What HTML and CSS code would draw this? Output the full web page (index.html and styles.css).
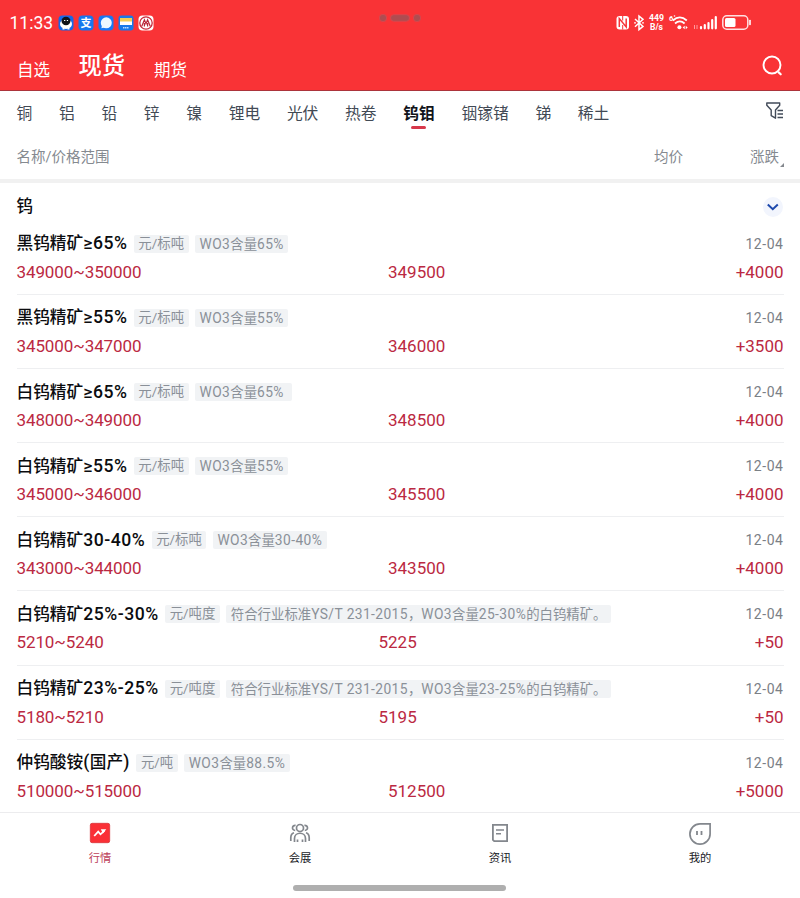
FILE: index.html
```
<!DOCTYPE html>
<html lang="zh-CN">
<head>
<meta charset="utf-8">
<title>现货行情</title>
<link rel="stylesheet" href="styles.css">
</head>
<body>
<header class="header">
  <div class="status">
    <span class="clock">11:33</span>
    <svg class="apps" width="98" height="16" viewBox="0 0 98 16">
      <rect x=".5" y=".5" width="15" height="15" rx="4" fill="#1768e8"/><ellipse cx="8" cy="9" rx="6" ry="5" fill="#fff"/><ellipse cx="8" cy="6" rx="4.5" ry="4.2" fill="#10131a"/><path d="M6 5.5h1.3M8.8 5.5h1.3" stroke="#fff"/><path d="M5.5 13v1.5M10.5 13v1.5" stroke="#fff" stroke-width="2"/>
      <rect x="20.5" y=".5" width="15" height="15" rx="4" fill="#1677ee"/><text x="28" y="12" text-anchor="middle" class="pay">支</text>
      <rect x="40.5" y=".5" width="15" height="15" rx="4" fill="#1878f4"/><circle cx="48.3" cy="7.8" r="5.5" fill="#eef7ff"/><path d="M44 10l-.6 3.3 4-1" fill="#eef7ff"/>
      <rect x="60.5" y=".5" width="15" height="15" rx="3" fill="#1879e9"/><path d="M62 3h12v7H62z" fill="#fff"/><path d="M62 3h12v3.5H62z" fill="#f4ce55"/><path d="M65 12.7h6" stroke="#b9dcff" stroke-width="1.5" stroke-dasharray="1.5 .5"/>
      <rect x="80.5" y=".5" width="15" height="15" rx="4" fill="#fff"/><circle cx="88" cy="8" r="6.2" fill="none" stroke="#c82839" stroke-width="1.3"/><path d="M83.8 11.3l2.6-6.5 1.6 4 1.6-4 2.6 6.500M86.400 8v3.500M89.600 8v3.500" fill="none" stroke="#b92639" stroke-width="1.2"/>
    </svg>
    <svg class="island" width="44" height="10" viewBox="0 0 44 10"><g fill="#ae4d51" stroke="#d9474d"><circle cx="5" cy="5" r="3.7"/><rect x="12.5" y="1.7" width="19" height="6.6" rx="3.3"/><circle cx="39" cy="5" r="3.7"/></g></svg>
    <svg class="signals" width="138" height="20" viewBox="616 13 138 20">
      <rect x="616.5" y="16" width="12.5" height="13.5" rx="3" fill="#fff"/><path d="M619.3 27V18.5L626.2 27V18.5" fill="none" stroke="#f73439" stroke-width="1.5"/><path d="M622.7 16v4.5M622.7 25v4.5" stroke="#f73439"/>
      <path d="M635 19l8 7.4-4 3.3V16l4 3.3-8 7.4" fill="none" stroke="#fff" stroke-width="1.5"/><circle cx="635" cy="22.8" r=".9" fill="#fff"/><circle cx="643" cy="22.8" r=".9" fill="#fff"/>
      <text x="656.5" y="21.2" class="rate" text-anchor="middle" textLength="15" lengthAdjust="spacingAndGlyphs">449</text><text x="656.5" y="30" class="rate" text-anchor="middle" textLength="13" lengthAdjust="spacingAndGlyphs">B/s</text>
      <text x="669" y="20.5" class="tiny">6</text><circle cx="674.5" cy="16" r=".8" fill="#fff"/>
      <g fill="none" stroke="#fff" stroke-width="1.8"><path d="M672.8 20.5q7-6.2 14 0M675 23.5q4.8-4.2 9.6 0"/></g><circle cx="679.4" cy="27.3" r="2" fill="#fff"/><path d="M684.7 25.7v3.6l-2-1.8zM685.7 25.7v3.6l2-1.8z" fill="#fff"/>
      <path d="M694.5 25v4M697 25v4" stroke="#ff9a9d"/><g stroke="#fff" stroke-width="2.2" stroke-linecap="round"><path d="M701 27v1.3M704.8 25v3.3M708.5 23v5.3M712.2 20v8.3M715.8 17v11.3"/></g>
      <rect x="722.8" y="15.8" width="25" height="13.4" rx="4" fill="none" stroke="#ffdfe0" stroke-width="1.5"/><rect x="725" y="18" width="10.5" height="9" rx="1.5" fill="#fff"/><path d="M750 20.5v4" stroke="#fff" stroke-width="1.6" stroke-linecap="round"/>
    </svg>
  </div>
  <nav class="modes">
    <span class="mode">自选</span><span class="mode mode-on">现货</span><span class="mode">期货</span>
    <svg class="search" width="22" height="24" viewBox="0 0 22 24"><circle cx="10" cy="11" r="8.5" fill="none" stroke="#fff" stroke-width="1.9"/><path d="M16.7 18.4l2 1.9" stroke="#fff" stroke-width="2.2" stroke-linecap="round"/></svg>
  </nav>
</header>
<nav class="metals">
  <span>铜</span><span>铝</span><span>铅</span><span>锌</span><span>镍</span><span>锂电</span><span>光伏</span><span>热卷</span><span class="metal-on">钨钼</span><span>铟镓锗</span><span>锑</span><span>稀土</span>
  <svg class="filter" width="18" height="18" viewBox="0 0 18 18"><path d="M.8 1h12.9v2.2L9.5 8v8.2l-4.3-2.5V8L.8 3.2z" fill="none" stroke="#424b59" stroke-width="1.4" stroke-linejoin="round"/><path d="M11.5 8.5H17M11.5 12H17M11.5 15.5H17" stroke="#424b59" stroke-width="1.4"/></svg>
</nav>
<div class="columns"><span>名称/价格范围</span><span class="col-avg">均价</span><span>涨跌</span><i class="sort"></i></div>
<main class="list">
  <div class="group"><h2>钨</h2><svg width="20" height="20" viewBox="0 0 20 20"><circle cx="10" cy="10" r="10" fill="#f2f5fd"/><path d="M4.8 7.500l5 4.700 5-4.700" fill="none" stroke="#1d49ad" stroke-width="2"/></svg></div>
  <article class="row"><div class="line"><h3>黑钨精矿<b>≥65%</b></h3><span class="tag">元/标吨</span><span class="tag"><b>WO3</b>含量<b>65%</b></span><time>12-04</time></div><div class="values"><span>349000~350000</span><span>349500</span><span>+4000</span></div></article>
  <article class="row"><div class="line"><h3>黑钨精矿<b>≥55%</b></h3><span class="tag">元/标吨</span><span class="tag"><b>WO3</b>含量<b>55%</b></span><time>12-04</time></div><div class="values"><span>345000~347000</span><span>346000</span><span>+3500</span></div></article>
  <article class="row"><div class="line"><h3>白钨精矿<b>≥65%</b></h3><span class="tag">元/标吨</span><span class="tag tag-loose"><b>WO3</b>含量<b>65%</b></span><time>12-04</time></div><div class="values"><span>348000~349000</span><span>348500</span><span>+4000</span></div></article>
  <article class="row"><div class="line"><h3>白钨精矿<b>≥55%</b></h3><span class="tag">元/标吨</span><span class="tag"><b>WO3</b>含量<b>55%</b></span><time>12-04</time></div><div class="values"><span>345000~346000</span><span>345500</span><span>+4000</span></div></article>
  <article class="row"><div class="line"><h3>白钨精矿<b>30-40%</b></h3><span class="tag">元/标吨</span><span class="tag"><b>WO3</b>含量<b>30-40%</b></span><time>12-04</time></div><div class="values"><span>343000~344000</span><span>343500</span><span>+4000</span></div></article>
  <article class="row"><div class="line"><h3>白钨精矿<b>25%-30%</b></h3><span class="tag">元/吨度</span><span class="tag">符合行业标准<b>YS/T 231-2015</b>，<b>WO3</b>含量<b>25-30%</b>的白钨精矿。</span><time>12-04</time></div><div class="values values-short"><span>5210~5240</span><span>5225</span><span>+50</span></div></article>
  <article class="row"><div class="line"><h3>白钨精矿<b>23%-25%</b></h3><span class="tag">元/吨度</span><span class="tag">符合行业标准<b>YS/T 231-2015</b>，<b>WO3</b>含量<b>23-25%</b>的白钨精矿。</span><time>12-04</time></div><div class="values values-short"><span>5180~5210</span><span>5195</span><span>+50</span></div></article>
  <article class="row"><div class="line"><h3>仲钨酸铵<b>(</b>国产<b>)</b></h3><span class="tag">元/吨</span><span class="tag"><b>WO3</b>含量<b>88.5%</b></span><time>12-04</time></div><div class="values"><span>510000~515000</span><span>512500</span><span>+5000</span></div></article>
</main>
<footer class="footer">
  <nav class="tabs">
    <div class="tab tab-on"><svg width="24" height="24" viewBox="0 0 24 24"><rect x="2.3" y="1.3" width="19.4" height="19.4" rx="1.8" fill="#fa3036" stroke="#d52c32" stroke-width=".7"/><path d="M6.2 14l4-4.3 2.3 2.6 4-3.7" fill="none" stroke="#fff" stroke-width="1.8"/><path d="M12.8 7.2h5.5l-3.4 4.3z" fill="#fff"/></svg><span>行情</span></div>
    <div class="tab"><svg width="24" height="24" viewBox="0 0 24 24"><g fill="none" stroke="#83878d" stroke-width="1.7"><circle cx="12" cy="6" r="3.5"/><path d="M6.5 20v-3.5c0-7 11-7 11 0V20M9.5 20v-2.5M14.5 20v-2.5M7.6 3.4C3.7 3 3.4 8.3 7.2 8.3M16.4 3.4c3.9-.4 4.2 4.9.4 4.9M2.8 19v-3.3c0-2.8 1.2-4.4 3.2-5M21.2 19v-3.3c0-2.8-1.2-4.4-3.2-5"/></g></svg><span>会展</span></div>
    <div class="tab"><svg width="24" height="24" viewBox="0 0 24 24"><path d="M4.9 2.8h14.2v16.4H6.2l-1.3-1.3z" fill="none" stroke="#83878d" stroke-width="1.8"/><path d="M8 8h8M8 11.8h5" stroke="#83878d" stroke-width="1.6"/></svg><span>资讯</span></div>
    <div class="tab"><svg width="24" height="24" viewBox="0 0 24 24"><path d="M12 1.9h10.1V12A10.1 10.1 0 1 1 12 1.9z" fill="none" stroke="#83878d" stroke-width="1.7"/><path d="M9 9v4M13.5 9v4" stroke="#83878d" stroke-width="1.8"/></svg><span>我的</span></div>
  </nav>
  <div class="home"></div>
</footer>
</body>
</html>
```
FILE: styles.css
```
* { box-sizing: border-box; }
body {
  margin: 0;
  width: 800px;
  height: 898px;
  overflow: hidden;
  display: flex;
  flex-direction: column;
  background: #fff;
  color: #0b0c0f;
  font-family: Roboto, "Noto Sans CJK SC", sans-serif;
}
h2, h3 { margin: 0; font-weight: 500; }
b { font-weight: inherit; }
svg { display: block; flex: none; }
.header { height: 91px; flex: none; background: #f93336; border-bottom: 1px solid #ac343b; color: #fff; }
.status { height: 45px; display: flex; align-items: center; padding-left: 9.5px; }
.clock { width: 48px; font-size: 17.5px; line-height: 24px; white-space: nowrap; }
.island { margin-left: 222px; margin-top: -9px; }
.signals { margin-left: 194px; }
.pay { font: 700 11px "Noto Sans CJK SC", sans-serif; fill: #fff; }
.rate { font: 700 8.3px Roboto, sans-serif; fill: #fff; }
.tiny { font: 700 7.5px Roboto, sans-serif; fill: #fff; }
.modes { height: 45px; display: flex; align-items: center; padding: 0 16px 0 17px; }
.mode { font-size: 16.5px; line-height: 24px; padding-top: 6px; }
.mode-on { font-size: 23.3px; line-height: 34px; font-weight: 500; margin: 0 29px 0 28.5px; padding: 0; position: relative; top: -1.5px; }
.search { margin-left: auto; margin-top: -4px; }
.metals { height: 44px; flex: none; display: flex; align-items: center; gap: 26.7px; padding: 2px 16px 0 16.5px; color: #424a55; font-size: 15.75px; line-height: 24px; }
.metal-on { color: #11141a; font-weight: 700; position: relative; }
.metal-on::after { content: ""; position: absolute; left: 8px; bottom: -3px; width: 15px; height: 3px; border-radius: 2px; background: #d7384b; }
.filter { margin-left: auto; margin-top: -7px; }
.columns { height: 48px; flex: none; display: flex; align-items: center; padding: 0 16px 3px 16.5px; border-bottom: 4px solid #f1f1f1; color: #858a90; font-size: 14.5px; }
.col-avg { margin-left: auto; margin-right: 67px; }
.sort { width: 0; height: 0; border-left: 4px solid transparent; border-bottom: 4px solid #84888e; margin: 18px 0 0 1px; }
.list { flex: 1; min-height: 0; overflow: hidden; padding: 0 16.5px; }
.group { height: 48px; display: flex; align-items: center; justify-content: space-between; }
.group h2 { font-size: 16.5px; line-height: 24px; }
.group svg { margin-right: 1px; }
.row { height: 74.15px; border-bottom: 1px solid #eeeff1; }
.row:first-of-type { height: 63.8px; }
.row + .row { padding-top: 10.6px; }
.line { height: 25px; display: flex; align-items: center; white-space: nowrap; }
.line h3 { font-size: 16.7px; line-height: 24px; }
.line h3 b { font-size: 17.6px; letter-spacing: .5px; }
.tag { height: 18px; margin-left: 6.5px; padding: 0 4.5px; border-radius: 2px; background: #f1f3f5; color: #8a9098; font-size: 13.4px; line-height: 18px; }
.tag b { font-size: 13.8px; letter-spacing: .4px; }
.tag-loose { padding-right: 8px; }
.line time { margin-left: auto; color: #7b8086; font-size: 14px; letter-spacing: .55px; }
.values { height: 31px; display: grid; grid-template-columns: 371.5px 1fr auto; align-items: center; color: #bb2942; font-size: 17px; }
.values-short { grid-template-columns: 362px 1fr auto; }
.values span:first-child { letter-spacing: -.1px; }
.footer { height: 86px; flex: none; border-top: 1px solid #ececee; background: #fff; }
.tabs { height: 71px; display: grid; grid-template-columns: repeat(4, 1fr); padding-top: 9px; }
.tab { display: flex; flex-direction: column; align-items: center; font-size: 11.3px; line-height: 16px; color: #191b1f; }
.tab span { margin-top: 5px; }
.tab-on { color: #bd4159; }
.home { width: 213px; height: 6px; border-radius: 3px; background: #afafaf; margin: 1px 0 0 293px; }
```
